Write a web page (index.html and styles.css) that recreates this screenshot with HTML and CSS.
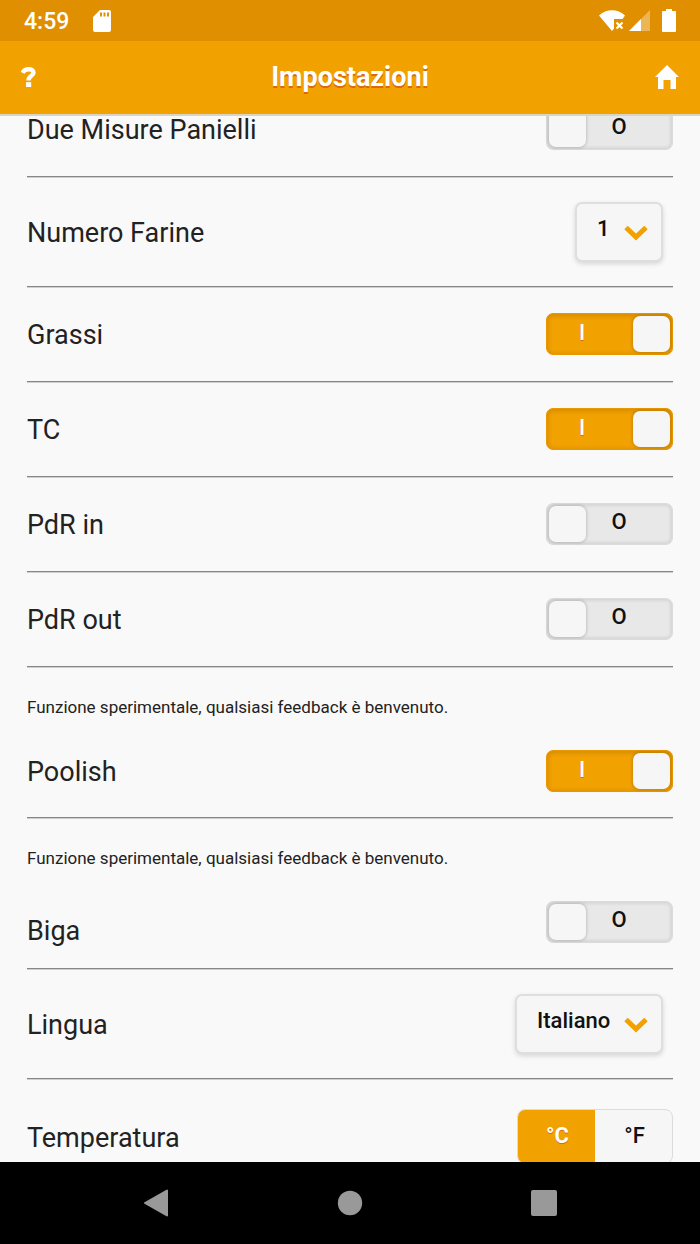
FILE: index.html
```html
<!DOCTYPE html>
<html lang="it">
<head>
<meta charset="utf-8">
<meta name="viewport" content="width=device-width, initial-scale=1">
<title>Impostazioni</title>
<link rel="stylesheet" href="styles.css">
</head>
<body>
<div class="status-bar">
  <span class="clock">4:59</span>
  <svg class="sd-icon" width="18" height="22" viewBox="0 0 18 22"><path fill="#fff" fill-rule="evenodd" d="M7 0h9a2 2 0 0 1 2 2v18a2 2 0 0 1-2 2H2a2 2 0 0 1-2-2V7zM7 2.500v4h2v-4zM10.500 2.500v4h2v-4zM14 2.500v4h2v-4z"/></svg>
  <div class="status-icons">
    <svg width="27" height="22" viewBox="0 0 27 22"><path fill="#fff" d="M0 5.500C7-1.500 19-1.500 26 5.500L23.500 9H15v9.500L13 21z"/><path stroke="#fff" stroke-width="2.200" d="M17.500 12.500l6 6M23.500 12.500l-6 6"/></svg>
    <svg width="21" height="21" viewBox="0 0 21 21"><path fill="#ecb654" d="M21 0v21H0z"/><path fill="#fff" d="M12 9v12H0z"/></svg>
    <svg class="battery" width="14" height="23" viewBox="0 0 14 23"><path fill="#fff" d="M4 0h6v2h3a1 1 0 0 1 1 1v19a1 1 0 0 1-1 1H1a1 1 0 0 1-1-1V3a1 1 0 0 1 1-1h3z"/></svg>
  </div>
</div>
<header class="app-header">
  <button class="icon-button" type="button" aria-label="Aiuto"><svg width="15" height="20" viewBox="0 0 15 20"><path fill="none" stroke="#fff" stroke-width="4.400" d="M1.500 5.800C3 3 5 2.200 7.500 2.200c3 0 5 1.300 5 3.500C12.500 9 7.500 8.500 7.500 13.500"/><path fill="#fff" d="M5 15.200h5.200V20H5z"/></svg></button>
  <h1 class="title">Impostazioni</h1>
  <button class="icon-button" type="button" aria-label="Home"><svg width="24" height="24" viewBox="0 0 24 24"><path fill="#fff" d="M12 0l12 12h-3v12h-5.500v-9h-7v9H3V12H0z"/></svg></button>
</header>
<main class="content">
  <div class="settings">
    <div class="row">
      <label class="name" for="misure">Due Misure Panielli</label>
      <div class="switch"><input type="checkbox" id="misure"><span class="knob"></span><span class="state">O</span></div>
    </div>
    <div class="row row-select">
      <label class="name" for="farine">Numero Farine</label>
      <div class="picker"><select id="farine"><option>1</option></select><svg class="chevron" width="24" height="16" viewBox="0 0 24 16"><path fill="none" stroke="#f1a100" stroke-width="5" d="M2 2.500l10 9.500L22 2.500"/></svg></div>
    </div>
    <div class="row">
      <label class="name" for="grassi">Grassi</label>
      <div class="switch on"><input type="checkbox" id="grassi" checked><span class="state">I</span><span class="knob"></span></div>
    </div>
    <div class="row">
      <label class="name" for="tc">TC</label>
      <div class="switch on"><input type="checkbox" id="tc" checked><span class="state">I</span><span class="knob"></span></div>
    </div>
    <div class="row">
      <label class="name" for="pdr-in">PdR in</label>
      <div class="switch"><input type="checkbox" id="pdr-in"><span class="knob"></span><span class="state">O</span></div>
    </div>
    <div class="row">
      <label class="name" for="pdr-out">PdR out</label>
      <div class="switch"><input type="checkbox" id="pdr-out"><span class="knob"></span><span class="state">O</span></div>
    </div>
    <div class="row row-noted">
      <p class="note">Funzione sperimentale, qualsiasi feedback è benvenuto.</p>
      <label class="name" for="poolish">Poolish</label>
      <div class="switch on"><input type="checkbox" id="poolish" checked><span class="state">I</span><span class="knob"></span></div>
    </div>
    <div class="row row-noted">
      <p class="note">Funzione sperimentale, qualsiasi feedback è benvenuto.</p>
      <label class="name name-low" for="biga">Biga</label>
      <div class="switch"><input type="checkbox" id="biga"><span class="knob"></span><span class="state">O</span></div>
    </div>
    <div class="row row-select">
      <label class="name" for="lingua">Lingua</label>
      <div class="picker"><select id="lingua" class="wide"><option>Italiano</option></select><svg class="chevron" width="24" height="16" viewBox="0 0 24 16"><path fill="none" stroke="#f1a100" stroke-width="5" d="M2 2.500l10 9.500L22 2.500"/></svg></div>
    </div>
    <div class="row row-last">
      <span class="name" id="temp-name">Temperatura</span>
      <div class="segments" role="radiogroup" aria-labelledby="temp-name">
        <label class="segment selected"><input type="radio" name="temp" checked>°C</label>
        <label class="segment"><input type="radio" name="temp">°F</label>
      </div>
    </div>
  </div>
</main>
<nav class="system-nav">
  <button type="button" aria-label="Indietro"><svg width="26" height="28" viewBox="0 0 26 28"><path fill="#999" stroke="#999" stroke-width="2" stroke-linejoin="round" d="M24 1.500v25L2 14z"/></svg></button>
  <button type="button" aria-label="Schermata principale"><svg width="26" height="26" viewBox="0 0 26 26"><circle cx="13" cy="13" r="12.200" fill="#999"/></svg></button>
  <button type="button" aria-label="Recenti"><svg width="26" height="26" viewBox="0 0 26 26"><rect width="26" height="26" rx="2" fill="#999"/></svg></button>
</nav>
</body>
</html>
```
FILE: styles.css
```css
* { box-sizing: border-box; }

body {
  margin: 0;
  height: 100vh;
  display: flex;
  flex-direction: column;
  background: #f9f9f9;
  color: #111;
  font-family: Roboto, sans-serif;
}

button {
  border: 0;
  padding: 0;
  background: none;
  display: flex;
}

svg { display: block; }

.status-bar {
  flex: none;
  height: 41px;
  padding: 0 24px;
  display: flex;
  align-items: center;
  gap: 24px;
  background: #e08f00;
}

.clock {
  padding-top: 3px;
  color: #fff;
  font-size: 23px;
  font-weight: 500;
  line-height: 24px;
}

.status-icons {
  margin-left: auto;
  display: flex;
  align-items: center;
  gap: 3px;
}

.battery { margin-left: 9px; }

.app-header {
  flex: none;
  height: 75px;
  padding: 0 21px 1px;
  display: grid;
  grid-template-columns: 1fr auto 1fr;
  align-items: center;
  background: #f1a100;
  border-bottom: 2px solid #dad4c4;
}

.icon-button:last-child { justify-self: end; }

.title {
  margin: 0;
  color: #fff;
  font-size: 27px;
  font-weight: 700;
  line-height: 32px;
  text-shadow: 0 2px 0 #d96a10;
}

.content {
  flex: 1;
  min-height: 0;
  overflow: hidden;
}

/* The list is scrolled so that its first row is partly under the header. */
.settings {
  margin-top: -34px;
  padding: 0 27px;
}

.row {
  padding: 26px 0;
  display: grid;
  grid-template-columns: 1fr auto;
  align-items: center;
  border-bottom: 1px solid #868686;
  box-shadow: 0 1px 0 #cfcfcf;
}

.row-select { padding: 25px 0 24px; }
.row-noted { padding-bottom: 25px; }
.row-last { padding-top: 30px; border: 0; }

.name {
  color: #222;
  font-size: 27px;
  font-weight: 400;
  line-height: 32px;
  padding-top: 2px;
}

.name-low {
  padding-top: 18px;
  line-height: 24px;
}

.note {
  grid-column: 1 / -1;
  margin: 4px 0 33px;
  color: #222;
  font-size: 17px;
  line-height: 20px;
  font-weight: 400;
}

.switch {
  width: 127px;
  height: 42px;
  padding: 2px;
  display: flex;
  position: relative;
  background: #e8e8e8;
  border: 1px solid #dcdcdc;
  border-radius: 7px;
  box-shadow: inset 0 0 3px 2px rgba(0, 0, 0, 0.08);
}

.switch input {
  position: absolute;
  inset: 0;
  width: 100%;
  height: 100%;
  margin: 0;
  opacity: 0;
}

.switch.on {
  background: #f1a100;
  border-color: #ea9700;
  box-shadow: inset 0 1px 4px 1px rgba(120, 60, 0, 0.22);
  color: #fff;
}

.knob {
  width: 37px;
  background: #f6f6f6;
  border-radius: 7px;
  box-shadow: 0 0 3px 1px rgba(0, 0, 0, 0.16);
}

.state {
  flex: 1;
  padding-right: 18px;
  text-align: center;
  font-size: 22px;
  font-weight: 500;
  line-height: 32px;
}

.on .state {
  line-height: 34px;
  text-shadow: 0 1px 0 #d96a10;
}

.picker {
  margin-right: 10px;
  position: relative;
}

.picker select {
  display: block;
  appearance: none;
  width: 88px;
  height: 60px;
  padding: 0 0 6px 20px;
  font: 500 22px/28px Roboto, sans-serif;
  color: #111;
  background: #f6f6f6;
  border: 2px solid #dedede;
  border-radius: 7px;
  box-shadow: 0 2px 5px rgba(0, 0, 0, 0.14);
}

.picker select.wide { width: 148px; }

.chevron {
  position: absolute;
  right: 15px;
  top: 23px;
  pointer-events: none;
}

.segments {
  display: flex;
  width: 156px;
  height: 55px;
  border: 1px solid #dcdcdc;
  border-radius: 8px;
  background: #f6f6f6;
  overflow: hidden;
}

.segment {
  flex: 1;
  padding-top: 12px;
  padding-left: 2px;
  text-align: center;
  font-size: 22px;
  font-weight: 500;
  line-height: 28px;
}

.segment input {
  position: absolute;
  margin: 0;
  opacity: 0;
}

.segment.selected {
  background: #f1a100;
  color: #fff;
  font-weight: 700;
  text-shadow: 0 1px 0 #d96a10;
}

.system-nav {
  flex: none;
  height: 82px;
  padding: 0 59px;
  display: grid;
  grid-template-columns: repeat(3, 1fr);
  align-items: center;
  justify-items: center;
  background: #000;
}
```
